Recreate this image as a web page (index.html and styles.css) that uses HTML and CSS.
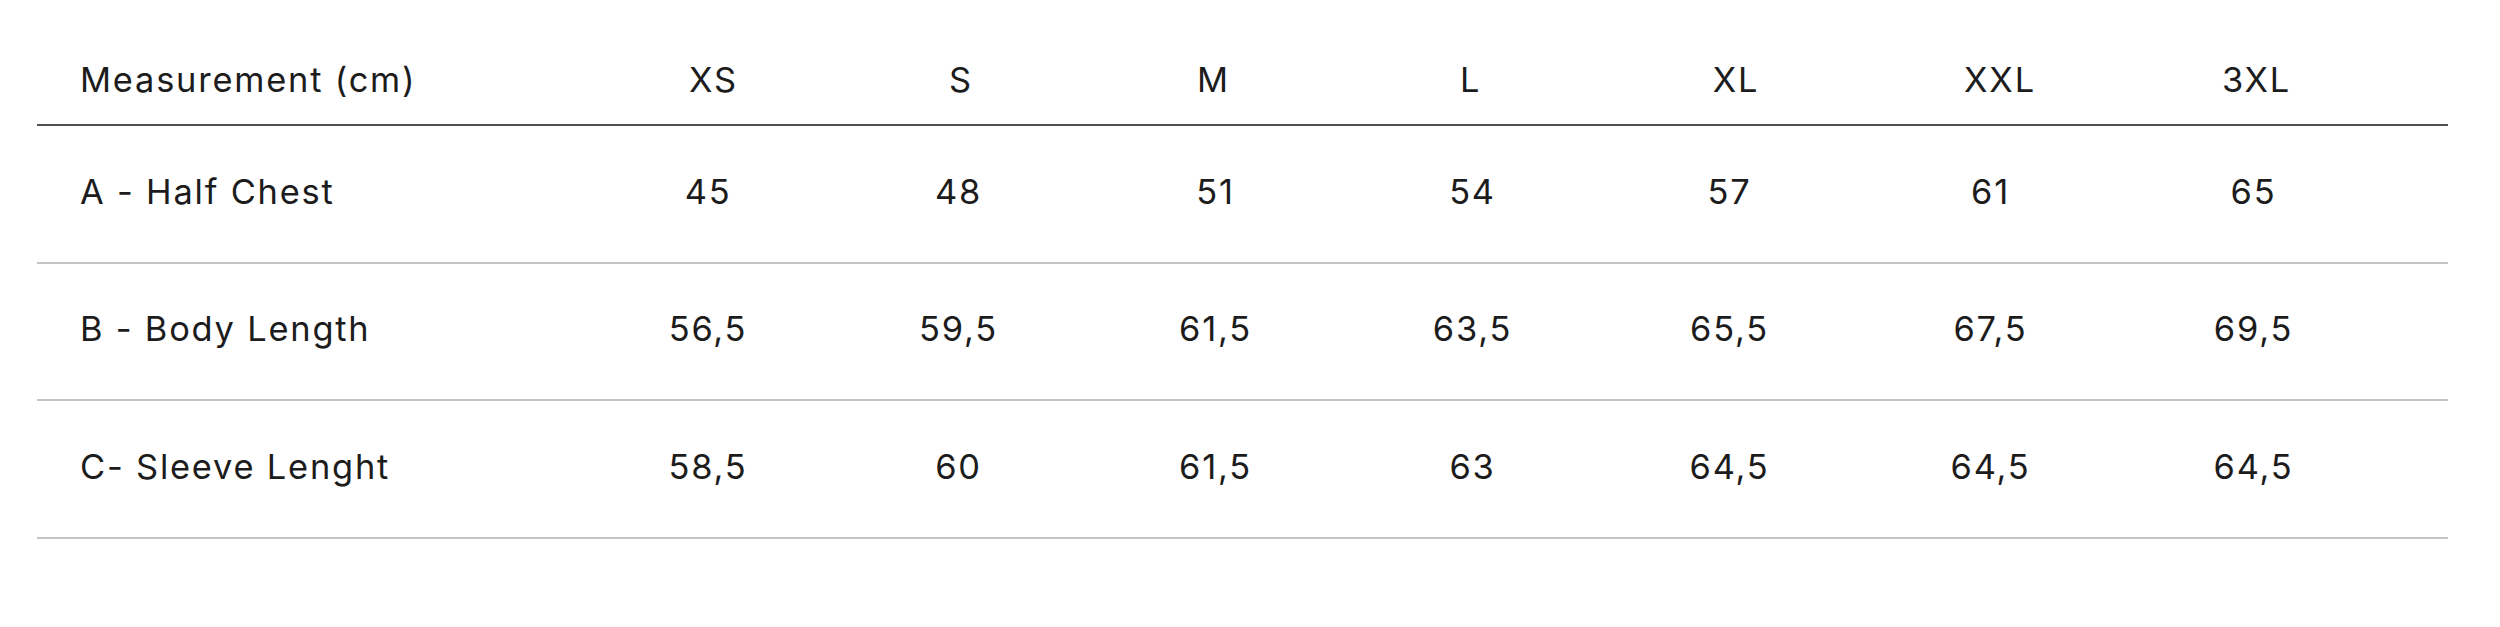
FILE: index.html
```html
<!DOCTYPE html>
<html lang="en">
<head>
<meta charset="utf-8">
<title>Size chart</title>
<link rel="stylesheet" href="styles.css">
</head>
<body>
<div class="page">
  <div class="chart" role="table">
    <div class="row head" role="row">
      <div class="cell label" role="columnheader">Measurement (cm)</div>
      <div class="cell" role="columnheader">XS</div>
      <div class="cell" role="columnheader">S</div>
      <div class="cell" role="columnheader">M</div>
      <div class="cell" role="columnheader">L</div>
      <div class="cell" role="columnheader">XL</div>
      <div class="cell" role="columnheader">XXL</div>
      <div class="cell" role="columnheader">3XL</div>
    </div>
    <div class="row data" role="row">
      <div class="cell label" role="rowheader">A - Half Chest</div>
      <div class="cell">45</div>
      <div class="cell">48</div>
      <div class="cell">51</div>
      <div class="cell">54</div>
      <div class="cell">57</div>
      <div class="cell">61</div>
      <div class="cell">65</div>
    </div>
    <div class="row data" role="row">
      <div class="cell label" role="rowheader">B - Body Length</div>
      <div class="cell">56,5</div>
      <div class="cell">59,5</div>
      <div class="cell">61,5</div>
      <div class="cell">63,5</div>
      <div class="cell">65,5</div>
      <div class="cell">67,5</div>
      <div class="cell">69,5</div>
    </div>
    <div class="row data" role="row">
      <div class="cell label" role="rowheader">C- Sleeve Lenght</div>
      <div class="cell">58,5</div>
      <div class="cell">60</div>
      <div class="cell">61,5</div>
      <div class="cell">63</div>
      <div class="cell">64,5</div>
      <div class="cell">64,5</div>
      <div class="cell">64,5</div>
    </div>
  </div>
</div>
</body>
</html>
```

FILE: styles.css
```css
* {
  box-sizing: border-box;
}

html, body {
  margin: 0;
  padding: 0;
  background: #ffffff;
}

body {
  font-family: Inter, "Liberation Sans", sans-serif;
  font-size: 34.4px;
  color: #1c1c1c;
}

.page {
  padding: 0 52px 0 37px;
}

.chart {
  display: flex;
  flex-direction: column;
}

.row {
  display: grid;
  align-items: center;
}

.head {
  grid-template-columns: 556px 241px 254px 251px 263px 268px 260px 253px;
  padding: 59px 0 24px;
  border-bottom: 2px solid #505050;
}

.data {
  grid-template-columns: 548px 246px 255px 259px 255px 259px 263px 263px;
  height: 137.6px;
  padding-bottom: 5px;
  border-bottom: 2px solid #c4c4c4;
}

.cell {
  text-align: center;
  line-height: normal;
  letter-spacing: 1.8px;
  white-space: nowrap;
}

.cell.label {
  text-align: left;
  padding-left: 43px;
}
```
